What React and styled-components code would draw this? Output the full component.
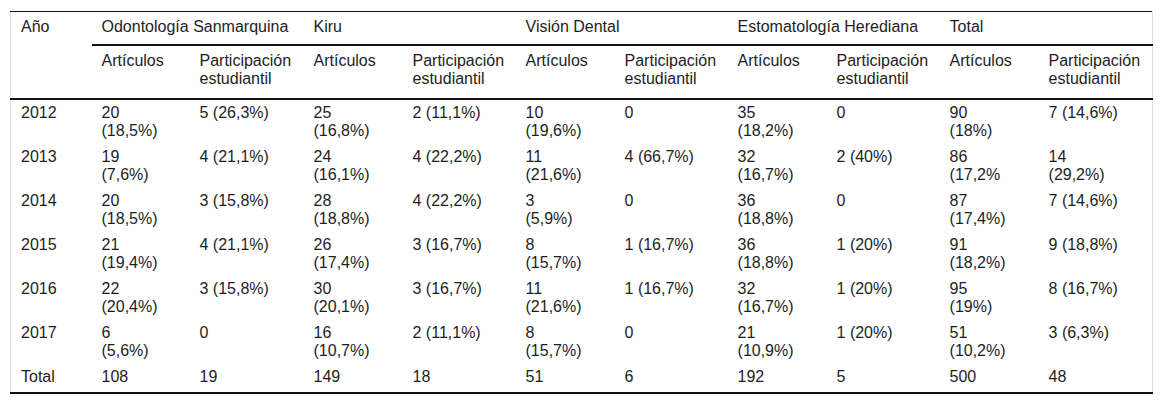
import React from "react";
import styled, { createGlobalStyle } from "styled-components";

const GlobalStyle = createGlobalStyle`
  body {
    margin: 0;
    background: #fff;
    font-family: "Liberation Sans", Arial, sans-serif;
  }
`;

const widths = [81, 98, 114, 99, 113, 99, 113, 99, 113, 99, 114];

const groups = [
  "Odontología Sanmarquina",
  "Kiru",
  "Visión Dental",
  "Estomatología Herediana",
  "Total",
];

// "\n" marks where the source text breaks onto a second line
const rows = [
  ["2012", "20\n(18,5%)", "5 (26,3%)", "25\n(16,8%)", "2 (11,1%)", "10\n(19,6%)", "0", "35\n(18,2%)", "0", "90\n(18%)", "7 (14,6%)"],
  ["2013", "19\n(7,6%)", "4 (21,1%)", "24\n(16,1%)", "4 (22,2%)", "11\n(21,6%)", "4 (66,7%)", "32\n(16,7%)", "2 (40%)", "86\n(17,2%", "14\n(29,2%)"],
  ["2014", "20\n(18,5%)", "3 (15,8%)", "28\n(18,8%)", "4 (22,2%)", "3\n(5,9%)", "0", "36\n(18,8%)", "0", "87\n(17,4%)", "7 (14,6%)"],
  ["2015", "21\n(19,4%)", "4 (21,1%)", "26\n(17,4%)", "3 (16,7%)", "8\n(15,7%)", "1 (16,7%)", "36\n(18,8%)", "1 (20%)", "91\n(18,2%)", "9 (18,8%)"],
  ["2016", "22\n(20,4%)", "3 (15,8%)", "30\n(20,1%)", "3 (16,7%)", "11\n(21,6%)", "1 (16,7%)", "32\n(16,7%)", "1 (20%)", "95\n(19%)", "8 (16,7%)"],
  ["2017", "6\n(5,6%)", "0", "16\n(10,7%)", "2 (11,1%)", "8\n(15,7%)", "0", "21\n(10,9%)", "1 (20%)", "51\n(10,2%)", "3 (6,3%)"],
  ["Total", "108", "19", "149", "18", "51", "6", "192", "5", "500", "48"],
];

export default function App() {
  return (
    <>
      <GlobalStyle />
      <Page>
        <Table>
          <colgroup>
            {widths.map((w, i) => (
              <col key={i} style={{ width: w }} />
            ))}
          </colgroup>
          <thead>
            <tr>
              <HeadCell rowSpan={2}>Año</HeadCell>
              {groups.map((g) => (
                <GroupCell key={g} colSpan={2}>
                  {g}
                </GroupCell>
              ))}
            </tr>
            <tr>
              {groups.map((g) => (
                <React.Fragment key={g}>
                  <SubCell>Artículos</SubCell>
                  <SubCell>
                    Participación
                    <br />
                    estudiantil
                  </SubCell>
                </React.Fragment>
              ))}
            </tr>
          </thead>
          <tbody>
            {rows.map((r, ri) => (
              <tr key={r[0]}>
                {r.map((v, i) => (
                  <Cell key={i} $last={ri === rows.length - 1}>
                    {v}
                  </Cell>
                ))}
              </tr>
            ))}
          </tbody>
        </Table>
      </Page>
    </>
  );
}

const Page = styled.div`
  padding: 11px 10px 0 10px;
`;

const Table = styled.table`
  width: 1142px;
  table-layout: fixed;
  border-collapse: collapse;
  border-top: 1px solid #111;
  border-left: 1px solid #ddd;
  border-right: 1px solid #ddd;
  border-bottom: 2px solid #111;
  font-size: 16px;
  line-height: 18px;
  color: #1e1e1e;
`;

const HeadCell = styled.th`
  text-align: left;
  vertical-align: top;
  font-weight: normal;
  padding: 6px 10px 10px 10px;
  border-bottom: 2px solid #111;
`;

const GroupCell = styled(HeadCell)`
  padding-bottom: 8px;
`;

const SubCell = styled(HeadCell)`
  padding-top: 6px;
`;

const Cell = styled.td`
  vertical-align: top;
  white-space: pre-line;
  padding: 4px 10px ${(p) => (p.$last ? "6px" : "4px")} 10px;
`;
